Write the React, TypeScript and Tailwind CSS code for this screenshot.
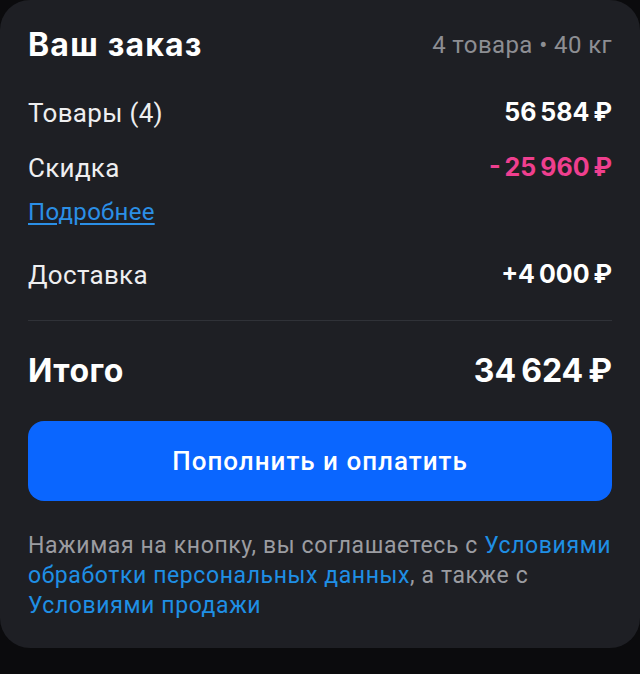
import { Fragment } from 'react';

const rows = [
  { label: 'Товары (4)', value: '56\u2009584\u2009₽', cls: 'text-white' },
  { label: 'Скидка', value: '-\u200925\u2009960\u2009₽', cls: 'text-[#ef3f8f]' },
];

export default function App() {
  return (
    <div className="min-h-[674px] bg-[#0b0b0d] font-['Roboto',sans-serif]">
      <div className="w-[640px] h-[648px] rounded-[30px] bg-[#1e1f24] px-[28px] pt-[25px]">
        <div className="flex items-center justify-between h-[40px]">
          <div className="font-['Inter',sans-serif] text-[32px] font-bold text-white tracking-[1.2px]">Ваш заказ</div>
          <div className="text-[24px] text-[#8d8e93] tracking-[0.4px]">4 товара • 40 кг</div>
        </div>

        <div className="mt-[31px]">
          {rows.map((r, i) => (
            <Fragment key={r.label}>
              <div className={`flex items-center justify-between h-[34px] ${i > 0 ? 'mt-[21px]' : ''}`}>
                <span className="text-[26px] tracking-[0.3px] text-[#eeeef0]">{r.label}</span>
                <span className={`font-['Inter',sans-serif] text-[25px] font-bold ${r.cls}`}>{r.value}</span>
              </div>
            </Fragment>
          ))}
          <a className="block mt-[12px] text-[24px] leading-[30px] tracking-[0.3px] text-[#2b8fe6] underline underline-offset-[3px]">Подробнее</a>
          <div className="flex items-center justify-between h-[34px] mt-[31px]">
            <span className="text-[26px] tracking-[0.3px] text-[#eeeef0]">Доставка</span>
            <span className="font-['Inter',sans-serif] text-[25px] font-bold text-white">+4{'\u2009'}000{'\u2009'}₽</span>
          </div>
        </div>

        <div className="mt-[28px] h-px bg-[#303238]" />

        <div className="flex items-center justify-between h-[40px] mt-[30px]">
          <span className="font-['Inter',sans-serif] text-[32px] font-bold text-white tracking-[0.5px]">Итого</span>
          <span className="font-['Inter',sans-serif] text-[32px] font-bold text-white">34{'\u2009'}624{'\u2009'}₽</span>
        </div>

        <button className="mt-[30px] w-full h-[80px] rounded-[16px] bg-[#0a66ff] text-white text-[26px] font-medium tracking-[1px]">
          Пополнить и оплатить
        </button>

        <p className="mt-[30px] text-[23px] leading-[30px] tracking-[0.6px] text-[#9b9ca1]">
          Нажимая на кнопку, вы соглашаетесь с{' '}
          <a className="text-[#1f8fe5]">Условиями обработки персональных данных</a>, а также с{' '}
          <a className="text-[#1f8fe5]">Условиями продажи</a>
        </p>
      </div>
    </div>
  );
}
